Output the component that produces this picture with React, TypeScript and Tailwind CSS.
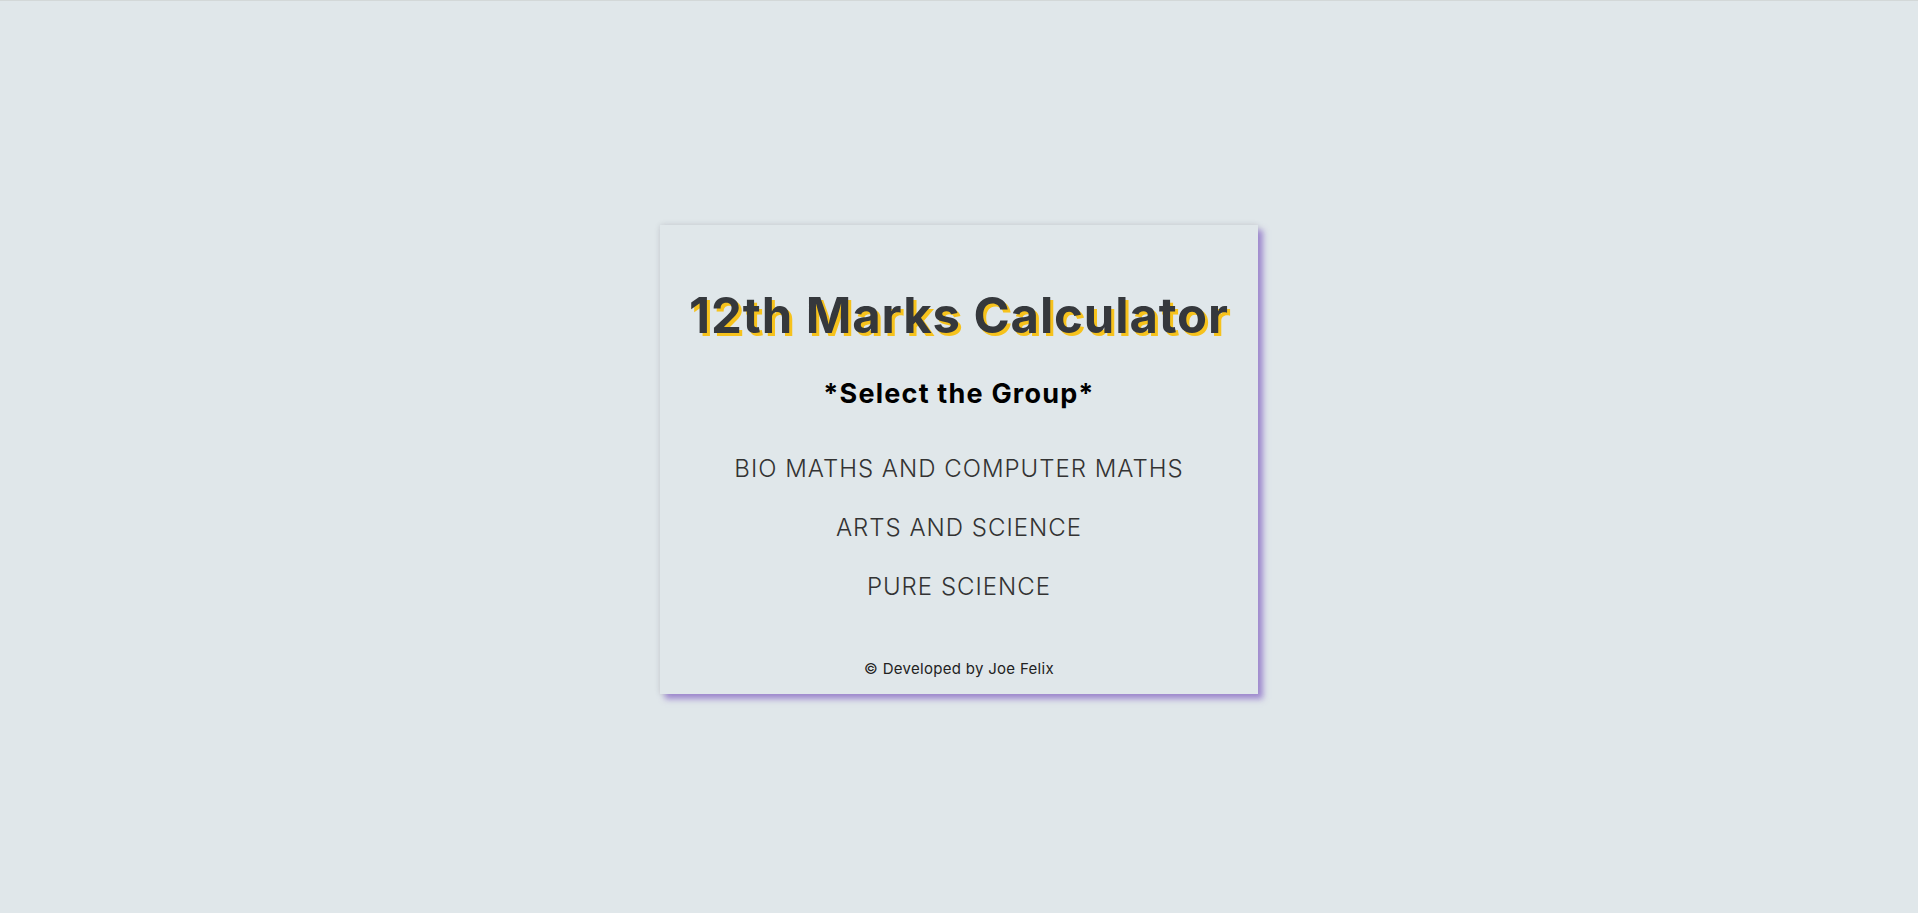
export default function App() {
  const groups = ["BIO MATHS AND COMPUTER MATHS", "ARTS AND SCIENCE", "PURE SCIENCE"];

  return (
    <div className="min-h-[913px] w-full bg-[#e0e7ea] border-t border-[#d3d8d8] pt-[4px] flex items-center justify-center font-['Inter',sans-serif]">
      <div className="w-[598px] h-[469px] bg-[#e0e7ea] flex flex-col items-center shadow-[5px_5px_6px_rgba(140,110,200,0.75),0_0_6px_rgba(0,0,0,0.12)]">
        <h1 className="mt-[62px] text-[49px] leading-[58px] font-bold tracking-[0.9px] text-[#35383c] [text-shadow:3px_3px_0_#f6c21c]">
          12th Marks Calculator
        </h1>
        <h2 className="mt-[33px] text-[27px] leading-[32px] font-bold tracking-[1.2px] text-black">*Select the Group*</h2>
        <div className="mt-[45px] flex flex-col items-center gap-[31px]">
          {groups.map((g) => (
            <a key={g} className="text-[24px] leading-[28px] font-light tracking-[1px] text-[#333] cursor-pointer">
              {g}
            </a>
          ))}
        </div>
        <p className="mt-[59px] text-[15px] leading-[18px] tracking-[0.3px] text-[#222]">© Developed by Joe Felix</p>
      </div>
    </div>
  );
}
